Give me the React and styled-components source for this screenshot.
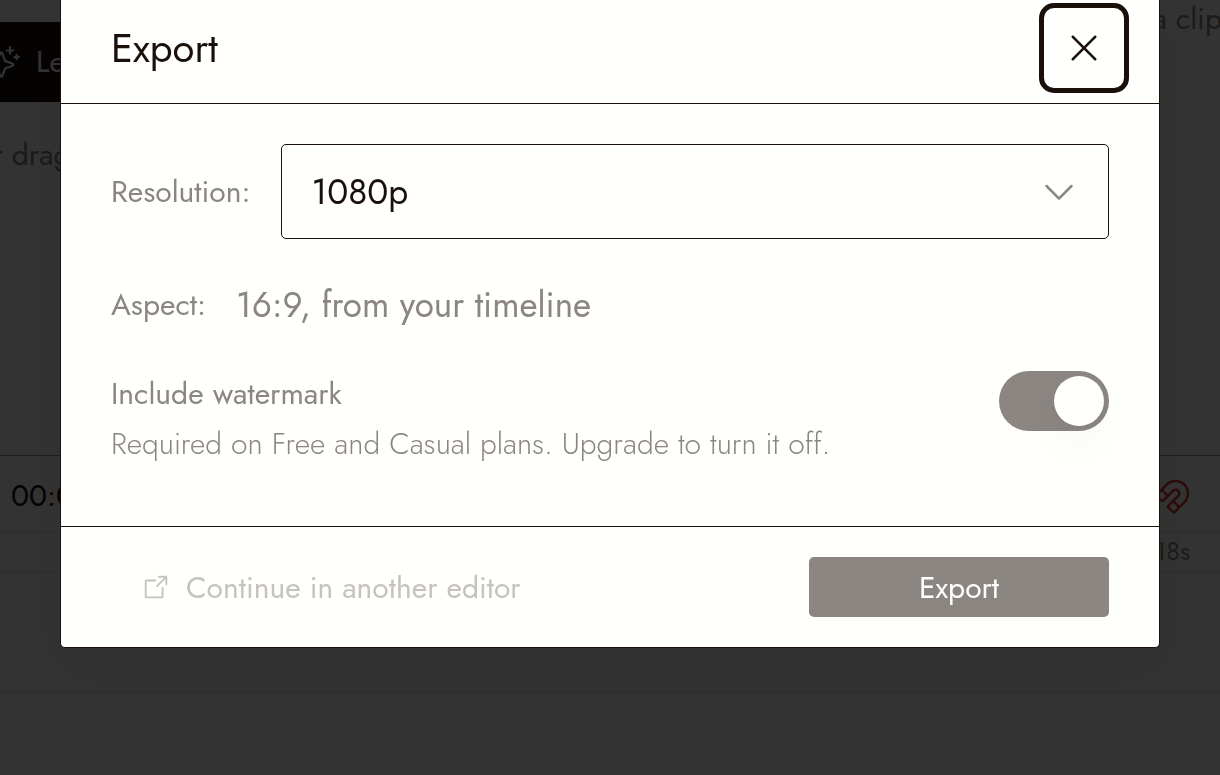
import React from "react";
import styled, { createGlobalStyle } from "styled-components";
import { PiArrowSquareOut, PiCaretDown, PiMagnet, PiSparkle, PiX } from "react-icons/pi";

const ink = "#1b0f0a";
const paper = "#fffffe";
const muted = "#8c8682";

const GlobalStyle = createGlobalStyle`
  * { box-sizing: border-box; }
  html, body, #root { height: 100%; }
  body {
    margin: 0;
    overflow: hidden;
    background: ${paper};
    color: ${ink};
    font-family: Jost, Lato, "Open Sans", sans-serif;
    font-size: 30px;
    line-height: 45px;
  }
  button, select { font: inherit; color: inherit; }
  p, h2 { margin: 0; font-weight: 400; }
  svg { flex: none; }
`;

const Editor = styled.main`
  min-height: 100%;
  display: flex;
  flex-direction: column;
`;

const Stage = styled.section`
  position: relative;
  height: 456px;
  padding-top: 22px;
  border-bottom: 1px solid #949494;
`;

const LearnButton = styled.button`
  display: flex;
  align-items: center;
  gap: 15px;
  width: 240px;
  height: 80px;
  margin-left: -14px;
  padding: 0;
  border: 0;
  background: ${ink};
  color: ${paper};
  line-height: 44px;
`;

const DropHint = styled.p`
  margin: 30px 0 0 -24px;
  color: ${muted};
`;

const ClipHint = styled.p`
  position: absolute;
  top: -4px;
  right: -2px;
  color: ${muted};
`;

const TimeBar = styled.div`
  display: flex;
  align-items: center;
  justify-content: space-between;
  height: 76px;
  padding: 4px 27px 0 11px;
  border-bottom: 1px solid #dcdcdc;
  svg { color: #dc3c32; }
`;

const Ruler = styled.div`
  display: flex;
  align-items: center;
  justify-content: flex-end;
  height: 40px;
  padding-right: 30px;
  border-bottom: 1px solid #dcdcdc;
  color: ${muted};
  font-size: 25px;
`;

const Track = styled.div`
  height: 120px;
  border-bottom: 1px solid #dcdcdc;
`;

const Overlay = styled.div`
  position: fixed;
  inset: 0;
  padding: 0 60px;
  background: rgba(0, 0, 0, 0.8);
`;

const Dialog = styled.div`
  border: 1px solid ${ink};
  border-top: 0;
  border-radius: 0 0 5px 5px;
  background: ${paper};
  box-shadow: 0 20px 60px rgba(27, 15, 10, 0.08);
`;

const Header = styled.header`
  display: flex;
  align-items: flex-start;
  justify-content: space-between;
  height: 104px;
  padding: 3px 30px 0 50px;
  border-bottom: 1px solid ${ink};
`;

const Title = styled.h2`
  font-size: 40px;
  line-height: 90px;
`;

const CloseButton = styled.button`
  display: grid;
  place-items: center;
  width: 90px;
  height: 90px;
  padding: 0;
  border: 5px solid ${ink};
  border-radius: 15px;
  background: transparent;
`;

const Body = styled.div`
  display: flex;
  flex-direction: column;
  gap: 40px;
  padding: 40px 50px 60px;
`;

const Field = styled.div`
  display: flex;
  align-items: center;
  gap: 30px;
  color: ${muted};
  line-height: 44px;
`;

const SelectBox = styled.div`
  position: relative;
  flex: 1;
  svg {
    position: absolute;
    right: 30px;
    top: 27px;
    pointer-events: none;
  }
`;

const Select = styled.select`
  display: block;
  width: 100%;
  height: 95px;
  padding: 0 30px;
  appearance: none;
  border: 1px solid ${ink};
  border-radius: 5px;
  background: transparent;
  color: ${ink};
  font-size: 35px;
`;

const Value = styled.span`
  font-size: 35px;
  line-height: 52px;
`;

const WatermarkRow = styled.div`
  display: flex;
  align-items: flex-start;
  justify-content: space-between;
  color: ${muted};
`;

const WatermarkText = styled.div`
  display: flex;
  flex-direction: column;
  gap: 5px;
`;

const Note = styled.p`
  font-weight: 300;
`;

const Toggle = styled.input`
  appearance: none;
  flex: none;
  width: 110px;
  height: 60px;
  margin: 0;
  padding: 5px;
  border-radius: 30px;
  background: ${muted};
  &::before {
    content: "";
    display: block;
    width: 50px;
    height: 50px;
    border-radius: 50%;
    background: ${paper};
    box-shadow: 0 20px 40px rgba(27, 15, 10, 0.03);
  }
  &:checked::before { margin-left: auto; }
`;

const Footer = styled.footer`
  display: flex;
  align-items: center;
  justify-content: space-between;
  padding: 30px 50px;
  border-top: 1px solid ${ink};
`;

const TextButton = styled.button`
  display: flex;
  align-items: center;
  gap: 15px;
  padding: 0 30px;
  border: 0;
  background: transparent;
  color: #c6c2c0;
`;

const PrimaryButton = styled.button`
  width: 300px;
  height: 60px;
  padding: 0;
  border: 0;
  border-radius: 5px;
  background: ${muted};
  color: ${paper};
`;

export default function App() {
  return (
    <>
      <GlobalStyle />
      <Editor>
        <Stage>
          <ClipHint>a clip</ClipHint>
          <LearnButton><PiSparkle size={35} />Learn</LearnButton>
          <DropHint>or drag</DropHint>
        </Stage>
        <TimeBar>
          <span>00:00</span>
          <PiMagnet size={40} />
        </TimeBar>
        <Ruler>18s</Ruler>
        <Track />
      </Editor>
      <Overlay>
        <Dialog role="dialog" aria-modal="true" aria-labelledby="export-title">
          <Header>
            <Title id="export-title">Export</Title>
            <CloseButton aria-label="Close"><PiX size={40} /></CloseButton>
          </Header>
          <Body>
            <Field>
              <label htmlFor="resolution">Resolution:</label>
              <SelectBox>
                <Select id="resolution" defaultValue="1080p">
                  <option>1080p</option>
                </Select>
                <PiCaretDown size={40} />
              </SelectBox>
            </Field>
            <Field>
              <span>Aspect:</span>
              <Value>16:9, from your timeline</Value>
            </Field>
            <WatermarkRow>
              <WatermarkText>
                <label htmlFor="watermark">Include watermark</label>
                <Note>Required on Free and Casual plans. Upgrade to turn it off.</Note>
              </WatermarkText>
              <Toggle id="watermark" type="checkbox" role="switch" defaultChecked />
            </WatermarkRow>
          </Body>
          <Footer>
            <TextButton disabled><PiArrowSquareOut size={30} />Continue in another editor</TextButton>
            <PrimaryButton>Export</PrimaryButton>
          </Footer>
        </Dialog>
      </Overlay>
    </>
  );
}
